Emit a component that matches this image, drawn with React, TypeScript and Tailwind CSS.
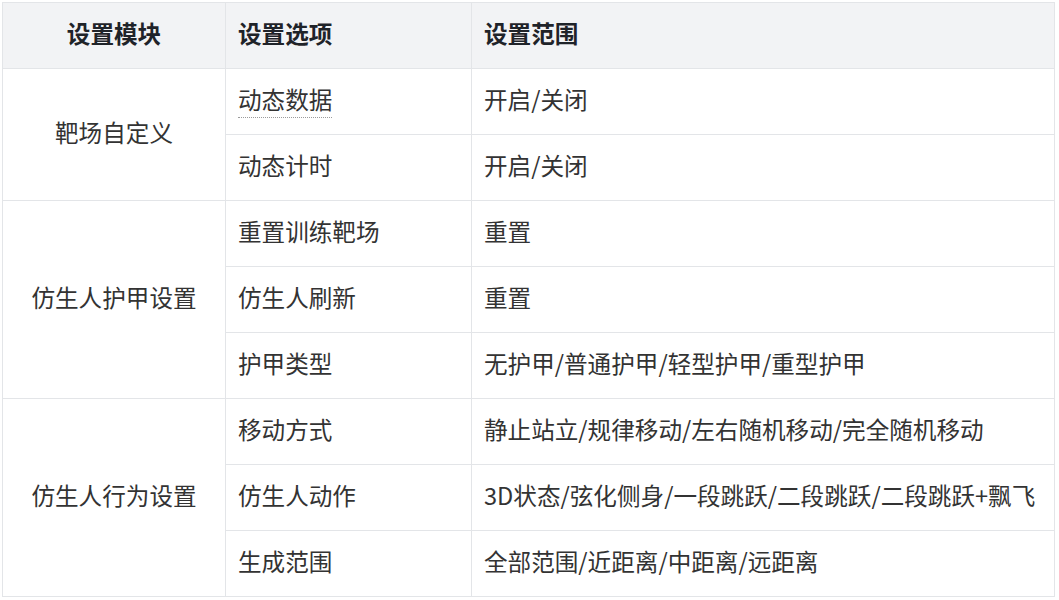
import React from "react";

type Group = {
  module: string;
  items: { option: string; range: string; dotted?: boolean }[];
};

const groups: Group[] = [
  {
    module: "靶场自定义",
    items: [
      { option: "动态数据", range: "开启/关闭", dotted: true },
      { option: "动态计时", range: "开启/关闭" },
    ],
  },
  {
    module: "仿生人护甲设置",
    items: [
      { option: "重置训练靶场", range: "重置" },
      { option: "仿生人刷新", range: "重置" },
      { option: "护甲类型", range: "无护甲/普通护甲/轻型护甲/重型护甲" },
    ],
  },
  {
    module: "仿生人行为设置",
    items: [
      { option: "移动方式", range: "静止站立/规律移动/左右随机移动/完全随机移动" },
      { option: "仿生人动作", range: "3D状态/弦化侧身/一段跳跃/二段跳跃/二段跳跃+飘飞" },
      { option: "生成范围", range: "全部范围/近距离/中距离/远距离" },
    ],
  },
];

const cell = "border border-[#e3e5e8] h-[66px] px-[12px] pb-[3px] align-middle";

export default function App() {
  return (
    <div
      className="min-h-[600px] bg-white pl-[2px] pt-[2px] text-[23.6px] leading-[1.4] text-[#333333]"
      style={{ fontFamily: '"Noto Sans CJK SC", "Noto Sans", sans-serif' }}
    >
      <table className="w-[1053px] table-fixed border-collapse">
        <colgroup>
          <col className="w-[223px]" />
          <col className="w-[246px]" />
          <col />
        </colgroup>
        <thead>
          <tr className="bg-[#f2f3f5] text-[#1f2329]">
            <th className={`${cell} text-center font-bold`}>设置模块</th>
            <th className={`${cell} text-left font-bold`}>设置选项</th>
            <th className={`${cell} text-left font-bold`}>设置范围</th>
          </tr>
        </thead>
        <tbody>
          {groups.map((g) =>
            g.items.map((it, i) => (
              <tr key={g.module + it.option}>
                {i === 0 && (
                  <td rowSpan={g.items.length} className={`${cell} text-center`}>
                    {g.module}
                  </td>
                )}
                <td className={cell}>
                  {it.dotted ? (
                    <span className="border-b border-dotted border-[#9a9a9a] pb-[1px]">
                      {it.option}
                    </span>
                  ) : (
                    it.option
                  )}
                </td>
                <td className={`${cell} whitespace-nowrap`}>{it.range}</td>
              </tr>
            ))
          )}
        </tbody>
      </table>
    </div>
  );
}
